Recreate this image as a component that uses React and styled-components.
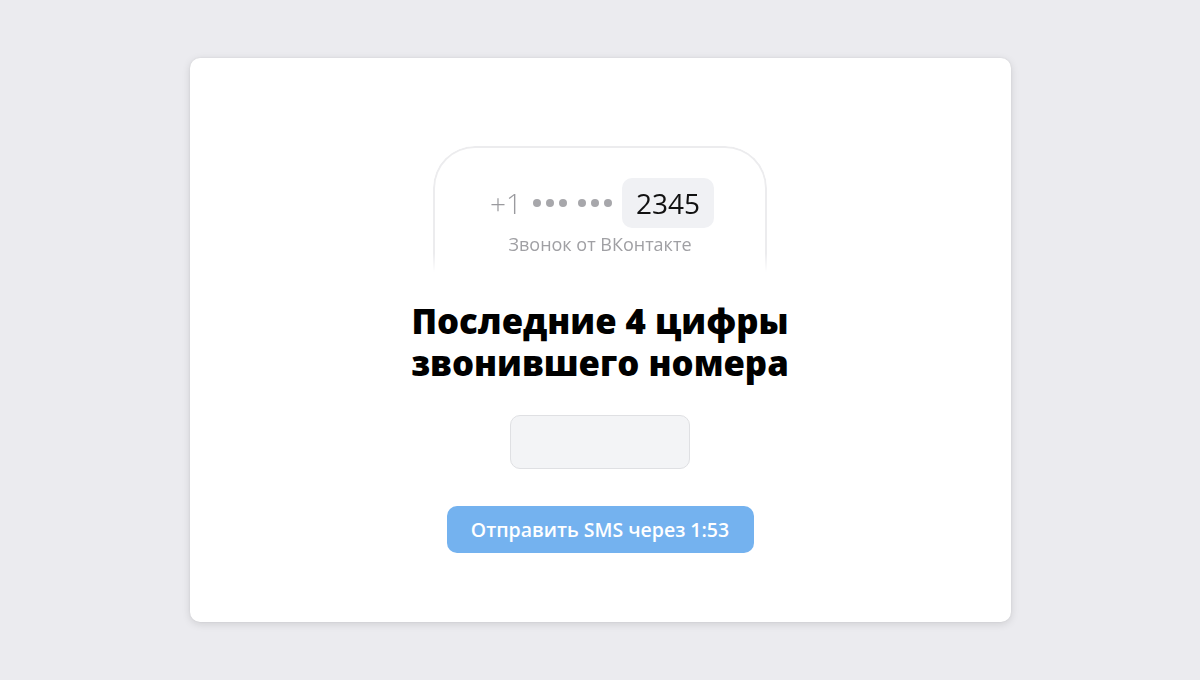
import React from "react";
import styled, { createGlobalStyle } from "styled-components";

const Global = createGlobalStyle`
  html, body { margin: 0; padding: 0; }
  body {
    background: #ebebef;
    font-family: "Open Sans", "Noto Sans", "Liberation Sans", sans-serif;
  }
`;

const Page = styled.div`
  width: 1200px;
  height: 680px;
  display: flex;
  align-items: center;
  justify-content: center;
`;

const Card = styled.div`
  width: 821px;
  height: 564px;
  box-sizing: border-box;
  background: #ffffff;
  border-radius: 10px;
  box-shadow: 0 2px 8px rgba(0, 0, 0, 0.12), 0 0 2px rgba(0, 0, 0, 0.08);
  display: flex;
  flex-direction: column;
  align-items: center;
  padding-top: 88px;
`;

const Phone = styled.div`
  width: 334px;
  height: 126px;
  box-sizing: border-box;
  border: 2px solid #ececee;
  border-bottom: none;
  border-radius: 42px 42px 0 0;
  display: flex;
  flex-direction: column;
  align-items: center;
  padding-top: 30px;
  -webkit-mask-image: linear-gradient(to bottom, #000 85%, rgba(0,0,0,0) 100%);
  mask-image: linear-gradient(to bottom, #000 85%, rgba(0,0,0,0) 100%);
`;

const NumberRow = styled.div`
  display: flex;
  align-items: center;
  gap: 10px;
  margin-left: 4px;
`;

const Masked = styled.span`
  font-size: 28px;
  font-weight: 300;
  color: #9a9a9e;
  display: flex;
  align-items: center;
  gap: 11px;
`;

const Dots = styled.span`
  display: inline-flex;
  gap: 5px;
`;

const Dot = styled.i`
  width: 8px;
  height: 8px;
  border-radius: 50%;
  background: #a7a7ab;
  display: block;
`;

const Chip = styled.span`
  width: 92px;
  height: 50px;
  box-sizing: border-box;
  background: #f0f1f4;
  border-radius: 10px;
  display: flex;
  align-items: center;
  justify-content: center;
  font-size: 28px;
  font-weight: 400;
  color: #111;
`;

const Caption = styled.div`
  margin-top: 4px;
  font-size: 18px;
  color: #a0a0a4;
`;

const Title = styled.h1`
  margin: 28px 0 0;
  font-size: 34.7px;
  line-height: 42px;
  font-weight: 800;
  color: #000;
  text-align: center;
`;

const Input = styled.input`
  margin-top: 31px;
  width: 180px;
  height: 54px;
  box-sizing: border-box;
  background: #f3f4f6;
  border: 1px solid #dfe0e3;
  border-radius: 10px;
  outline: none;
`;

const Button = styled.button`
  margin-top: 37px;
  width: 307px;
  height: 47px;
  border: none;
  border-radius: 10px;
  background: #74b2ef;
  color: #ffffff;
  font-family: inherit;
  font-size: 19.5px;
  font-weight: 600;
  cursor: default;
`;

export default function App() {
  return (
    <>
      <Global />
      <Page>
        <Card>
          <Phone>
            <NumberRow>
              <Masked>
                +1
                <Dots><Dot /><Dot /><Dot /></Dots>
                <Dots><Dot /><Dot /><Dot /></Dots>
              </Masked>
              <Chip>2345</Chip>
            </NumberRow>
            <Caption>Звонок от ВКонтакте</Caption>
          </Phone>
          <Title>
            Последние 4 цифры
            <br />
            звонившего номера
          </Title>
          <Input aria-label="code" />
          <Button>Отправить SMS через 1:53</Button>
        </Card>
      </Page>
    </>
  );
}
